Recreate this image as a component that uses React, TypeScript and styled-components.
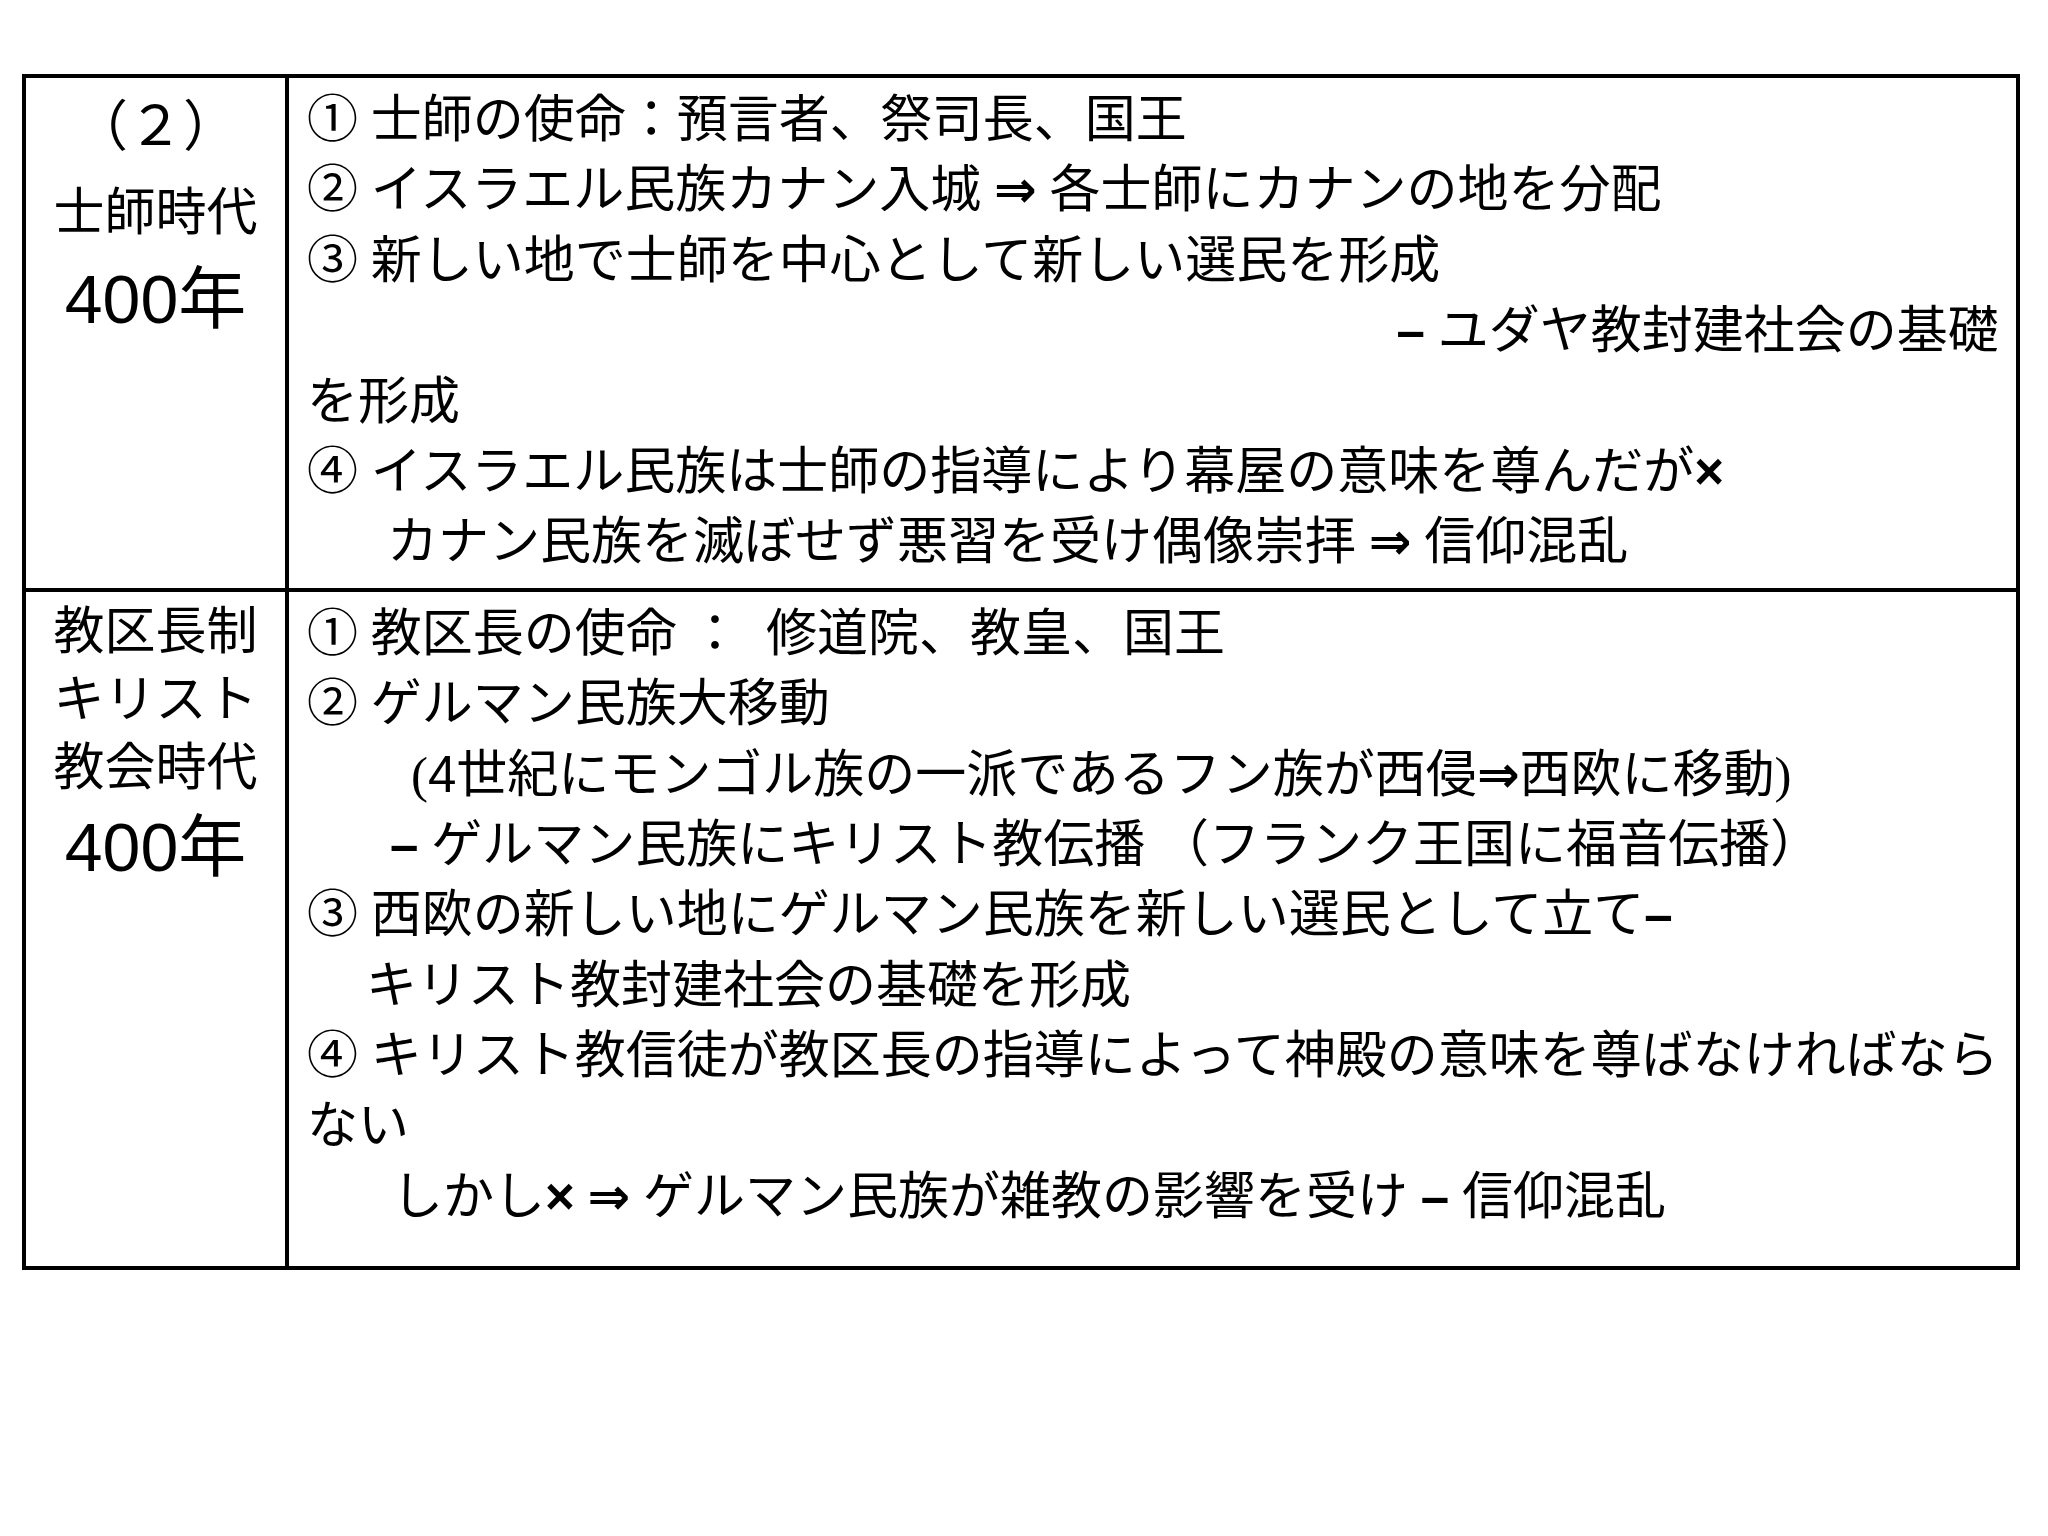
import React from 'react';
import styled, { createGlobalStyle } from 'styled-components';

const GlobalStyle = createGlobalStyle`
  html, body {
    margin: 0;
    padding: 0;
    background: #fff;
  }
  body {
    width: 2048px;
    height: 1536px;
    overflow: hidden;
  }
`;

const Page = styled.div`
  padding: 74px 0 0 22px;
  font-family: 'Liberation Serif', 'Noto Sans CJK JP', serif;
  color: #000;
`;

const Table = styled.div`
  width: 1998px;
  box-sizing: border-box;
  border: 4px solid #000;
  display: grid;
  grid-template-columns: 263px 1fr;
`;

const EraCell = styled.div<{ $divided?: boolean }>`
  box-sizing: border-box;
  border-right: 4px solid #000;
  border-top: ${(p) => (p.$divided ? '4px solid #000' : 'none')};
  padding-top: 6px;
  display: flex;
  flex-direction: column;
  align-items: center;
`;

const EraLine = styled.div<{ $size: number; $height: number }>`
  font-size: ${(p) => p.$size}px;
  height: ${(p) => p.$height}px;
  line-height: ${(p) => p.$height}px;
  white-space: nowrap;
`;

const Digits = styled.span`
  font-family: 'Liberation Sans', 'Noto Sans CJK JP', sans-serif;
`;

const BodyCell = styled.div<{ $divided?: boolean; $bottom: number }>`
  border-top: ${(p) => (p.$divided ? '4px solid #000' : 'none')};
  padding: 7px 20px ${(p) => p.$bottom}px 18px;
  font-size: 51px;
`;

const Line = styled.div<{ $indent?: number; $right?: boolean }>`
  height: 70.4px;
  line-height: 70.4px;
  white-space: pre;
  padding-left: ${(p) => p.$indent ?? 0}px;
  text-align: ${(p) => (p.$right ? 'right' : 'left')};
`;

const Sym = styled.span`
  font-family: 'Liberation Sans', 'DejaVu Sans', sans-serif;
  font-weight: bold;
`;

const Num = styled.span`
  font-family: 'Liberation Sans', sans-serif;
`;

const Arrow = () => <Sym>⇒</Sym>;
const Cross = () => <Sym>×</Sym>;
const Dash = () => <Sym>–</Sym>;

export default function App() {
  return (
    <Page>
      <GlobalStyle />
      <Table>
        <EraCell>
          <EraLine $size={55} $height={86}>（２）</EraLine>
          <EraLine $size={51} $height={86}>士師時代</EraLine>
          <EraLine $size={68} $height={86}>
            <Digits>400</Digits>年
          </EraLine>
        </EraCell>
        <BodyCell $bottom={10}>
          <Line>① 士師の使命：預言者、祭司長、国王</Line>
          <Line>
            ② イスラエル民族カナン入城 <Arrow /> 各士師にカナンの地を分配
          </Line>
          <Line>③ 新しい地で士師を中心として新しい選民を形成</Line>
          <Line $right>
            <Dash /> ユダヤ教封建社会の基礎
          </Line>
          <Line>を形成</Line>
          <Line>
            ④ イスラエル民族は士師の指導により幕屋の意味を尊んだが<Cross />
          </Line>
          <Line $indent={80}>
            カナン民族を滅ぼせず悪習を受け偶像崇拝 <Arrow /> 信仰混乱
          </Line>
        </BodyCell>

        <EraCell $divided>
          <EraLine $size={51} $height={68}>教区長制</EraLine>
          <EraLine $size={51} $height={68}>キリスト</EraLine>
          <EraLine $size={51} $height={68}>教会時代</EraLine>
          <EraLine $size={68} $height={90}>
            <Digits>400</Digits>年
          </EraLine>
        </EraCell>
        <BodyCell $divided $bottom={34}>
          <Line>① 教区長の使命 ：  修道院、教皇、国王</Line>
          <Line>② ゲルマン民族大移動</Line>
          <Line $indent={104}>
            (<Num>4</Num>世紀にモンゴル族の一派であるフン族が西侵<Arrow />西欧に移動)
          </Line>
          <Line $indent={83}>
            <Dash /> ゲルマン民族にキリスト教伝播 （フランク王国に福音伝播）
          </Line>
          <Line>
            ③ 西欧の新しい地にゲルマン民族を新しい選民として立て<Dash />
          </Line>
          <Line $indent={59}>キリスト教封建社会の基礎を形成</Line>
          <Line>④ キリスト教信徒が教区長の指導によって神殿の意味を尊ばなければなら</Line>
          <Line>ない</Line>
          <Line $indent={85}>
            しかし<Cross /> <Arrow /> ゲルマン民族が雑教の影響を受け <Dash /> 信仰混乱
          </Line>
        </BodyCell>
      </Table>
    </Page>
  );
}
